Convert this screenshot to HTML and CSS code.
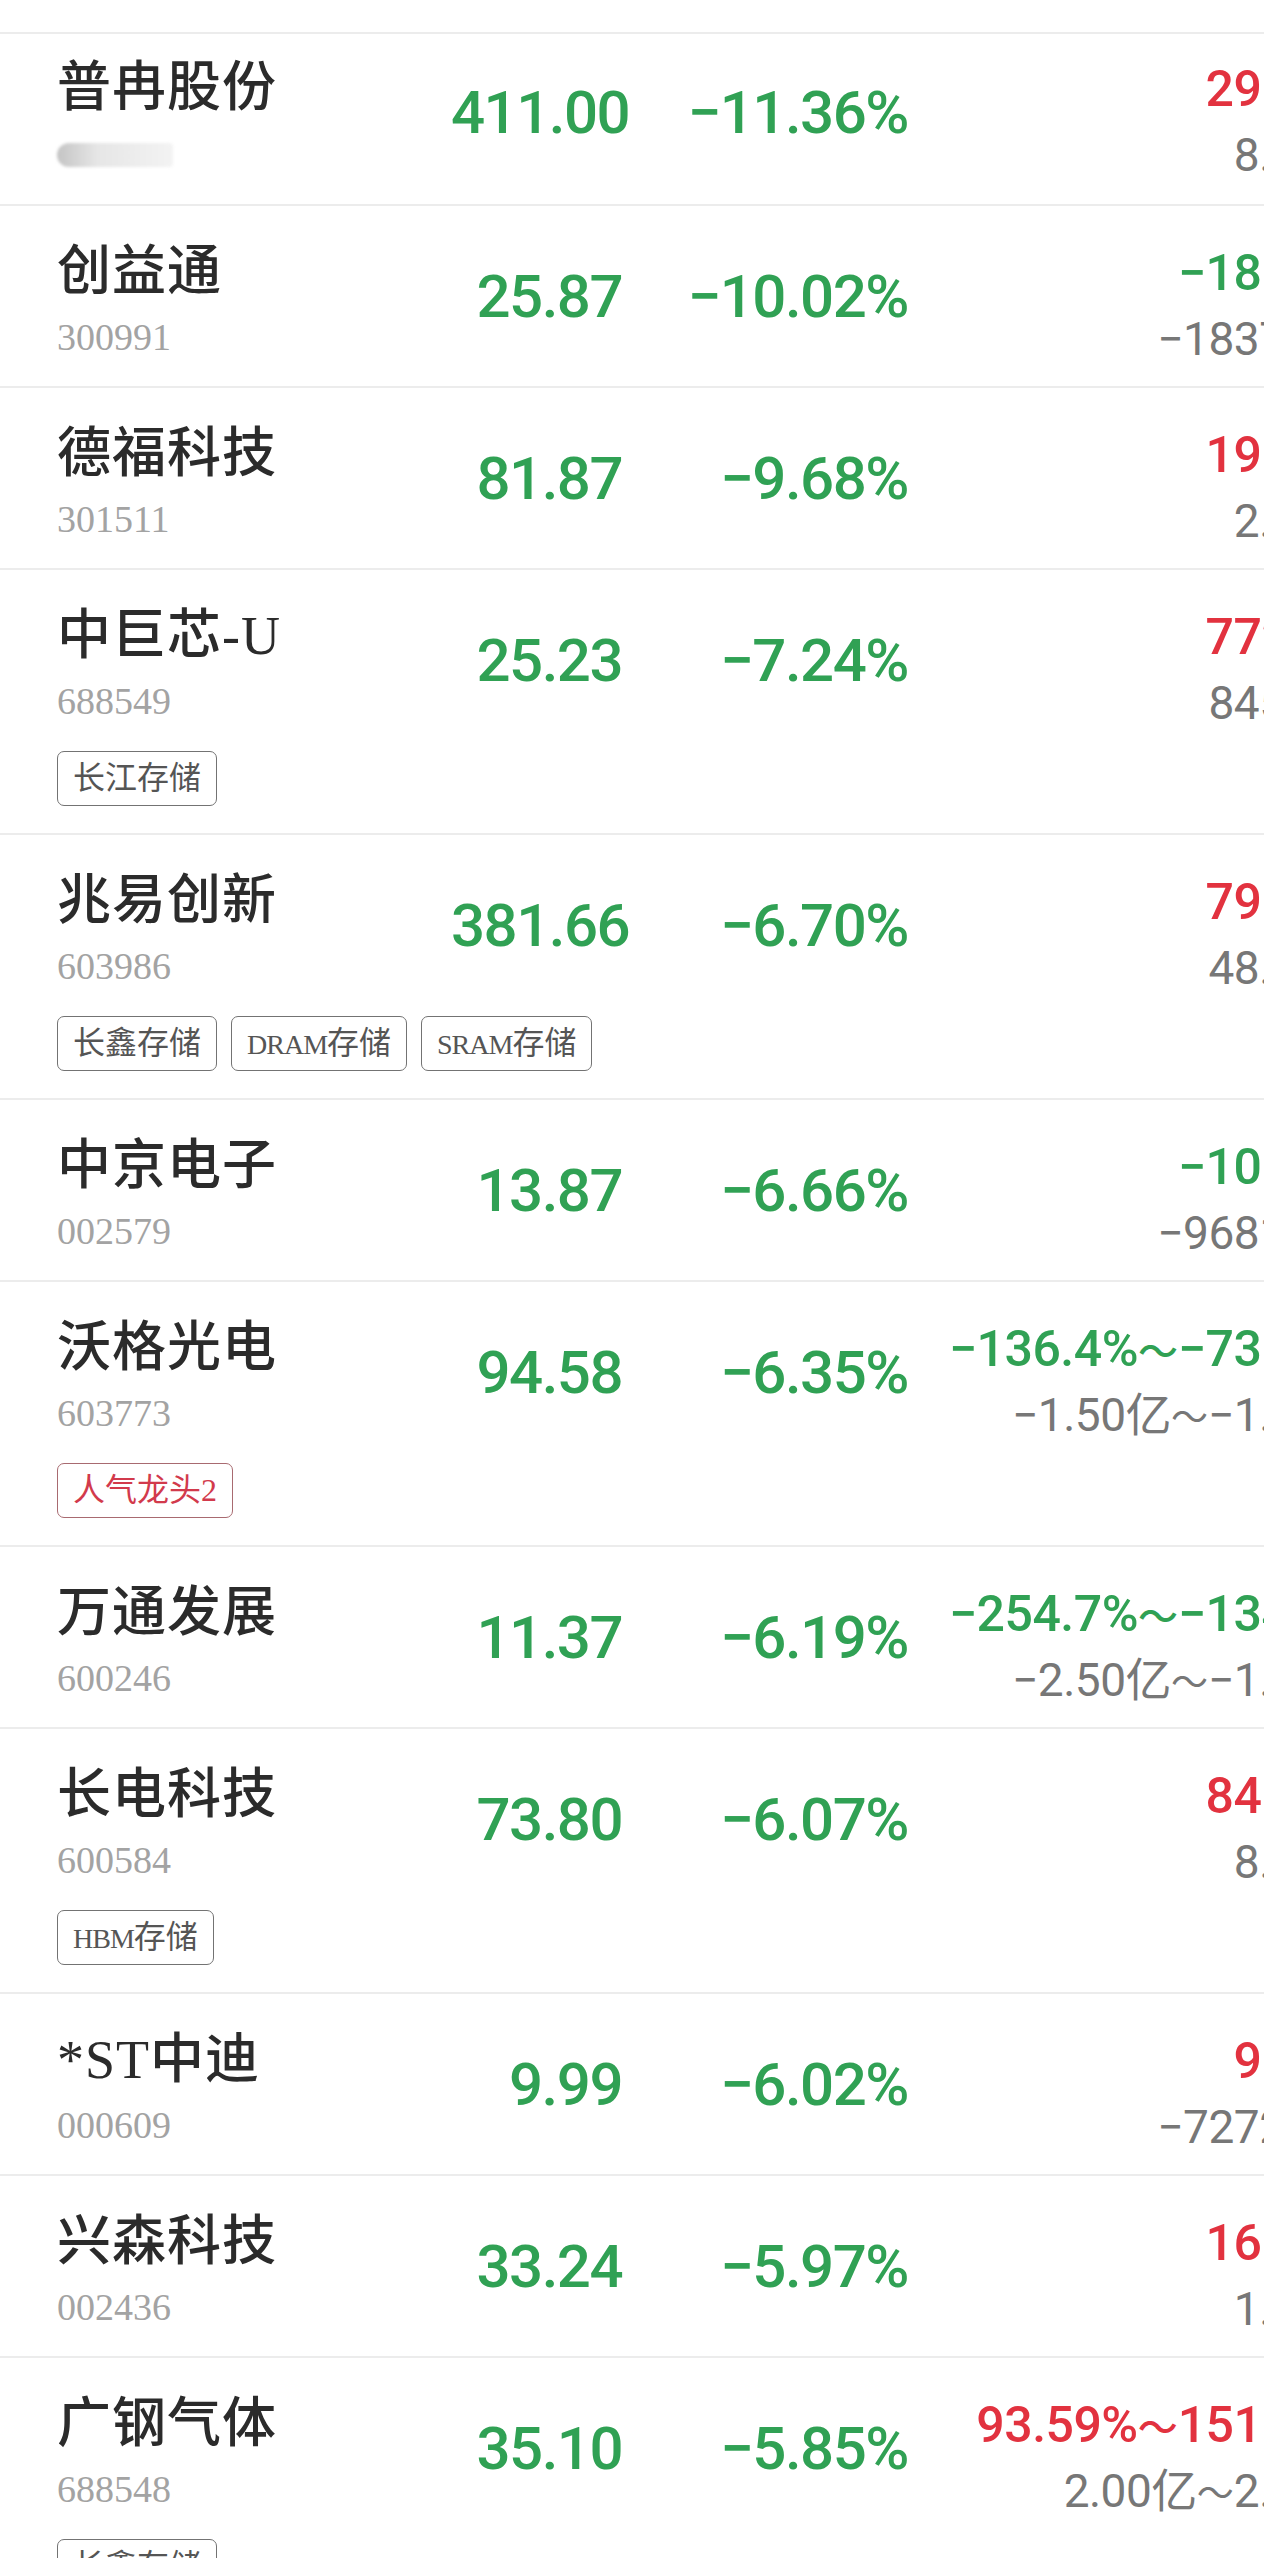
FILE: index.html
```html
<!DOCTYPE html>
<html lang="zh-CN">
<head>
<meta charset="utf-8">
<title>跌幅榜</title>
<link rel="stylesheet" href="styles.css">
</head>
<body>
<div class="screen">
  <div class="top-gap"></div>

  <div class="row first">
    <div class="head">
      <div class="name">普冉股份</div>
      <div class="code"><span class="blur"></span></div>
    </div>
    <div class="price down">411.00</div>
    <div class="chg down">−11.36%</div>
    <div class="fc"><div class="fc1 up">29.65%</div><div class="fc2">8.11亿</div></div>
  </div>

  <div class="row">
    <div class="head">
      <div class="name">创益通</div>
      <div class="code">300991</div>
    </div>
    <div class="price down">25.87</div>
    <div class="chg down">−10.02%</div>
    <div class="fc"><div class="fc1 down">−18.52%</div><div class="fc2">−1837.6万</div></div>
  </div>

  <div class="row">
    <div class="head">
      <div class="name">德福科技</div>
      <div class="code">301511</div>
    </div>
    <div class="price down">81.87</div>
    <div class="chg down">−9.68%</div>
    <div class="fc"><div class="fc1 up">19.37%</div><div class="fc2">2.05亿</div></div>
  </div>

  <div class="row">
    <div class="head">
      <div class="name">中巨芯-U</div>
      <div class="code">688549</div>
    </div>
    <div class="price down">25.23</div>
    <div class="chg down">−7.24%</div>
    <div class="fc"><div class="fc1 up">772.4%</div><div class="fc2">845.3万</div></div>
    <div class="tags"><span class="tag">长江存储</span></div>
  </div>

  <div class="row">
    <div class="head">
      <div class="name">兆易创新</div>
      <div class="code">603986</div>
    </div>
    <div class="price down">381.66</div>
    <div class="chg down">−6.70%</div>
    <div class="fc"><div class="fc1 up">796.8%</div><div class="fc2">48.62万</div></div>
    <div class="tags"><span class="tag">长鑫存储</span><span class="tag"><span class="lat">DRAM</span>存储</span><span class="tag"><span class="lat">SRAM</span>存储</span></div>
  </div>

  <div class="row">
    <div class="head">
      <div class="name">中京电子</div>
      <div class="code">002579</div>
    </div>
    <div class="price down">13.87</div>
    <div class="chg down">−6.66%</div>
    <div class="fc"><div class="fc1 down">−10.86%</div><div class="fc2">−9681.2万</div></div>
  </div>

  <div class="row">
    <div class="head">
      <div class="name">沃格光电</div>
      <div class="code">603773</div>
    </div>
    <div class="price down">94.58</div>
    <div class="chg down">−6.35%</div>
    <div class="fc"><div class="fc1 down">−136.4%<span class="tl">～</span>−73.52%</div><div class="fc2">−1.50亿<span class="tl">～</span>−1.10亿</div></div>
    <div class="tags"><span class="tag hot">人气龙头2</span></div>
  </div>

  <div class="row">
    <div class="head">
      <div class="name">万通发展</div>
      <div class="code">600246</div>
    </div>
    <div class="price down">11.37</div>
    <div class="chg down">−6.19%</div>
    <div class="fc"><div class="fc1 down">−254.7%<span class="tl">～</span>−134.2%</div><div class="fc2">−2.50亿<span class="tl">～</span>−1.60亿</div></div>
  </div>

  <div class="row">
    <div class="head">
      <div class="name">长电科技</div>
      <div class="code">600584</div>
    </div>
    <div class="price down">73.80</div>
    <div class="chg down">−6.07%</div>
    <div class="fc"><div class="fc1 up">84.26%</div><div class="fc2">8.66亿</div></div>
    <div class="tags"><span class="tag"><span class="lat">HBM</span>存储</span></div>
  </div>

  <div class="row">
    <div class="head">
      <div class="name">*ST中迪</div>
      <div class="code">000609</div>
    </div>
    <div class="price down">9.99</div>
    <div class="chg down">−6.02%</div>
    <div class="fc"><div class="fc1 up">9.51%</div><div class="fc2">−7272.4万</div></div>
  </div>

  <div class="row">
    <div class="head">
      <div class="name">兴森科技</div>
      <div class="code">002436</div>
    </div>
    <div class="price down">33.24</div>
    <div class="chg down">−5.97%</div>
    <div class="fc"><div class="fc1 up">166.3%</div><div class="fc2">1.02亿</div></div>
  </div>

  <div class="row">
    <div class="head">
      <div class="name">广钢气体</div>
      <div class="code">688548</div>
    </div>
    <div class="price down">35.10</div>
    <div class="chg down">−5.85%</div>
    <div class="fc"><div class="fc1 up">93.59%<span class="tl">～</span>151.25%</div><div class="fc2">2.00亿<span class="tl">～</span>2.60亿</div></div>
    <div class="tags"><span class="tag">长鑫存储</span></div>
  </div>
</div>
</body>
</html>
```

FILE: styles.css
```css
html, body {
  margin: 0;
  padding: 0;
  background: #ffffff;
}

body {
  width: 1264px;
  overflow: hidden;
}

.screen {
  width: 1264px;
  overflow: hidden;
}

.top-gap {
  height: 32px;
  border-bottom: 2px solid #ececec;
  width: 1400px;
}

.row {
  display: grid;
  grid-template-columns: 394px 171px 286px 459px;
  grid-template-rows: auto auto;
  width: 1310px;
  padding: 32px 0 18px 57px;
  border-bottom: 2px solid #ececec;
}

.row.first {
  padding-top: 20px;
  padding-bottom: 20px;
}

.head {
  grid-column: 1;
  grid-row: 1;
  display: flex;
  flex-direction: column;
}

.name {
  font-family: "Liberation Serif", "Noto Sans CJK SC", serif;
  font-size: 54px;
  font-weight: 500;
  letter-spacing: 1px;
  line-height: 68px;
  color: #2b2b2b;
  white-space: nowrap;
}

.code {
  font-family: "Liberation Serif", serif;
  font-size: 38px;
  line-height: 62px;
  color: #a3a3a3;
  height: 62px;
  display: flex;
  align-items: center;
}

.blur {
  display: block;
  width: 116px;
  height: 24px;
  border-radius: 12px 4px 4px 12px;
  background: linear-gradient(90deg, #c4c4c4 0%, #e6e6e6 35%, #f3f3f3 100%);
  filter: blur(1.5px);
  margin-top: 4px;
}

.price, .chg {
  grid-row: 1;
  align-self: center;
  margin-bottom: 12px;
  text-align: right;
  font-family: "Roboto", sans-serif;
  font-weight: 500;
  font-size: 60px;
  letter-spacing: -1.5px;
  line-height: 70px;
  white-space: nowrap;
}

.price { grid-column: 2; }
.chg { grid-column: 3; }

.down { color: #30a154; }
.up { color: #e2323f; }

.fc {
  grid-column: 4;
  grid-row: 1;
  text-align: right;
  font-family: "Roboto", "Noto Sans CJK SC", sans-serif;
  white-space: nowrap;
  padding-top: 4px;
}

.fc1 {
  font-size: 50px;
  font-weight: 500;
  line-height: 62px;
  height: 62px;
  letter-spacing: -0.5px;
}

.fc2 {
  font-size: 46px;
  line-height: 56px;
  height: 56px;
  margin-top: 7px;
  color: #777777;
  letter-spacing: -0.5px;
}

.tl {
  font-size: 40px;
  line-height: 0;
  letter-spacing: 0;
}

.fc2 .tl {
  font-size: 37px;
}

.tags {
  grid-column: 1 / span 4;
  grid-row: 2;
  display: flex;
  gap: 14px;
  margin-top: 19px;
  margin-bottom: 9px;
}

.tag {
  display: block;
  box-sizing: border-box;
  height: 55px;
  padding: 0 15px;
  border: 1.5px solid #737373;
  border-radius: 7px;
  font-family: "Liberation Serif", "Noto Sans CJK SC", serif;
  font-size: 32px;
  line-height: 52px;
  color: #555555;
  white-space: nowrap;
}

.tag .lat {
  font-size: 28px;
  letter-spacing: -1px;
}

.tag.hot {
  color: #d23a4c;
  border-color: #a86a70;
}
```
